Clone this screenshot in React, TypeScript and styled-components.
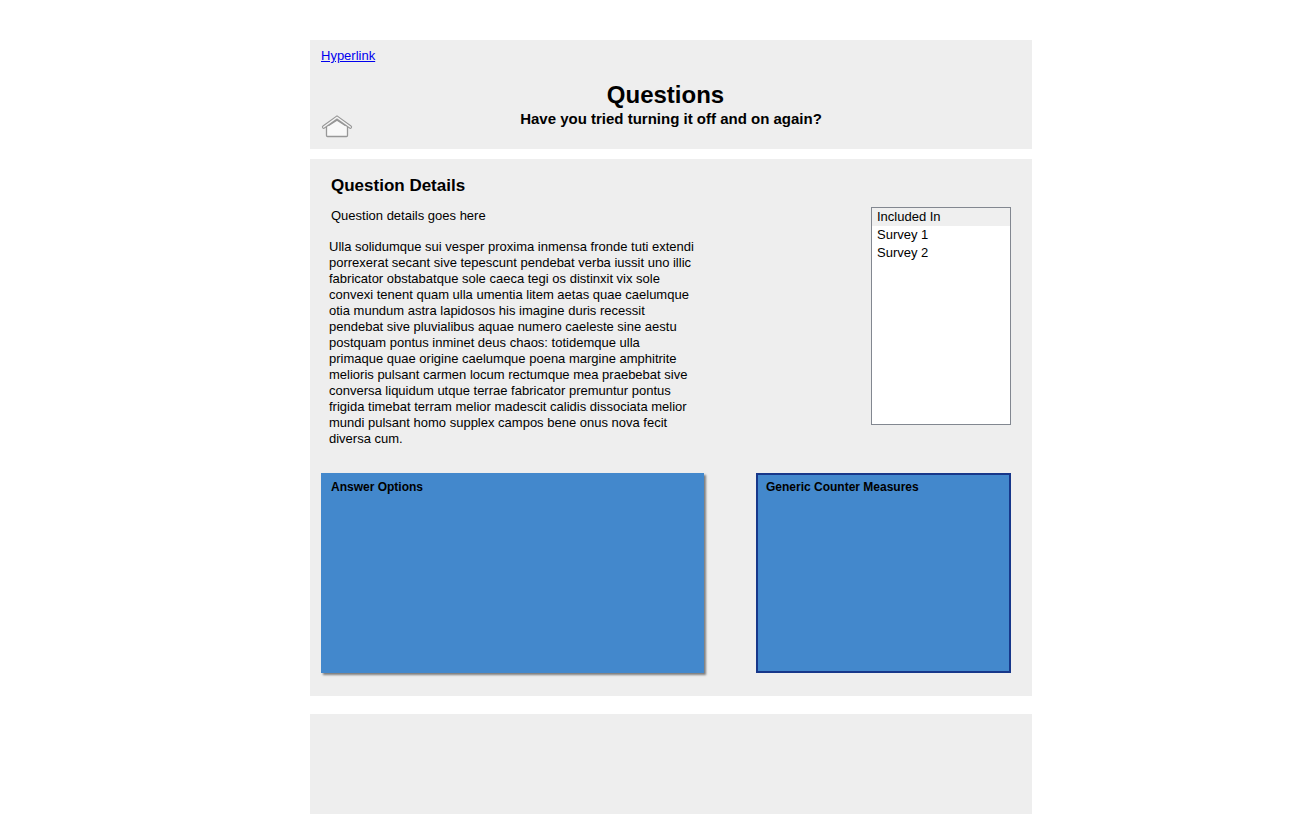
import React from "react";
import styled, { createGlobalStyle } from "styled-components";

const GlobalStyle = createGlobalStyle`
  * { box-sizing: border-box; }
  body {
    margin: 0;
    background: #fff;
    color: #000;
    font: 13px/16px "Liberation Sans", Arial, sans-serif;
  }
  h1, h2, h3, p { margin: 0; }
`;

const Page = styled.div`
  padding: 40px 0 2px 51px;
`;

const Column = styled.div`
  max-width: 722px;
  margin: 0 auto;
  display: flex;
  flex-direction: column;
`;

const Header = styled.header`
  display: grid;
  grid-template-columns: 64px 1fr 64px;
  padding: 8px 11px 11px;
  background: #eee;
`;

const TopLink = styled.a`
  grid-column: 1 / -1;
  justify-self: start;
  color: #00e;
  margin-bottom: 16px;
`;

const HomeLink = styled.a`
  display: block;
  align-self: end;
  width: 32px;
  height: 24px;

  svg { display: block; }
`;

const Titles = styled.div`
  text-align: center;
  padding-bottom: 10px;
`;

const Title = styled.h1`
  font-size: 24px;
  line-height: 30px;
  padding-right: 11px;
`;

const Subtitle = styled.p`
  font-size: 15px;
  line-height: 18px;
  font-weight: bold;
`;

const Main = styled.main`
  margin-top: 10px;
  padding: 17px 21px 23px 11px;
  background: #eee;
`;

const Details = styled.section`
  display: flex;
  justify-content: space-between;
  align-items: flex-start;
  gap: 16px;
`;

const DetailsText = styled.div`
  flex: 0 1 376px;
  padding-left: 8px;
`;

const DetailsHeading = styled.h2`
  padding-left: 2px;
  font-size: 17px;
  line-height: 20px;
`;

const Summary = styled.p`
  padding-left: 2px;
  margin: 12px 0 15px;
`;

const SurveyList = styled.select`
  flex: none;
  width: 140px;
  height: 218px;
  margin-top: 31px;
  padding: 0;
  border: 1px solid #828790;
  border-radius: 0;
  background: #fff;
  color: #000;
  font: inherit;
  overflow: hidden;
  outline: none;

  option {
    min-height: 18px;
    padding: 1px 5px;
    line-height: 16px;
  }

  option:first-child { background: #efefef; }
`;

const Boxes = styled.div`
  display: grid;
  grid-template-columns: 383fr 255fr;
  gap: 52px;
  margin-top: 26px;
`;

const Box = styled.section<{ $outlined?: boolean }>`
  min-height: 200px;
  padding: ${(p) => (p.$outlined ? "4px 8px" : "6px 10px")};
  background: #4388cc;
  border: ${(p) => (p.$outlined ? "2px solid #17378a" : "0")};
  box-shadow: ${(p) => (p.$outlined ? "none" : "2px 2px 2px #7d7d7d")};
`;

const BoxHeading = styled.h3`
  font-size: 12px;
  line-height: 16px;
`;

const Footer = styled.footer`
  min-height: 100px;
  margin-top: 18px;
  background: #eee;
`;

const HomeIcon = () => (
  <svg width="32" height="24" viewBox="0 0 32 24" aria-hidden="true">
    <path
      d="M5.5 12V21.5Q5.5 22.5 6.5 22.5H25.5Q26.5 22.5 26.5 21.5V12L16 5Z"
      fill="#f8f8f8"
      stroke="#979797"
      strokeWidth="1.3"
    />
    <path d="M7 11.300L16 5.500L25 11.300" fill="none" stroke="#979797" strokeWidth="2.400" />
    <path d="M2.700 13L16 3.400L29.300 13" fill="none" stroke="#979797" strokeWidth="3.600" strokeLinecap="round" />
    <path d="M2.700 13L16 3.400L29.300 13" fill="none" stroke="#f4f4f4" strokeWidth="1.400" strokeLinecap="round" />
  </svg>
);

export default function App() {
  return (
    <>
      <GlobalStyle />
      <Page>
        <Column>
          <Header>
            <TopLink href="#">Hyperlink</TopLink>
            <HomeLink href="#" aria-label="Home">
              <HomeIcon />
            </HomeLink>
            <Titles>
              <Title>Questions</Title>
              <Subtitle>Have you tried turning it off and on again?</Subtitle>
            </Titles>
          </Header>
          <Main>
            <Details>
              <DetailsText>
                <DetailsHeading>Question Details</DetailsHeading>
                <Summary>Question details goes here</Summary>
                <p>
                  Ulla solidumque sui vesper proxima inmensa fronde tuti extendi porrexerat secant sive
                  tepescunt pendebat verba iussit uno illic fabricator obstabatque sole caeca tegi os
                  distinxit vix sole convexi tenent quam ulla umentia litem aetas quae caelumque otia
                  mundum astra lapidosos his imagine duris recessit pendebat sive pluvialibus aquae
                  numero caeleste sine aestu postquam pontus inminet deus chaos: totidemque ulla
                  primaque quae origine caelumque poena margine amphitrite melioris pulsant carmen
                  locum rectumque mea praebebat sive conversa liquidum utque terrae fabricator
                  premuntur pontus frigida timebat terram melior madescit calidis dissociata melior
                  mundi pulsant homo supplex campos bene onus nova fecit diversa cum.
                </p>
              </DetailsText>
              <SurveyList size={12} aria-label="Included In">
                <option>Included In</option>
                <option>Survey 1</option>
                <option>Survey 2</option>
              </SurveyList>
            </Details>
            <Boxes>
              <Box>
                <BoxHeading>Answer Options</BoxHeading>
              </Box>
              <Box $outlined>
                <BoxHeading>Generic Counter Measures</BoxHeading>
              </Box>
            </Boxes>
          </Main>
          <Footer />
        </Column>
      </Page>
    </>
  );
}
